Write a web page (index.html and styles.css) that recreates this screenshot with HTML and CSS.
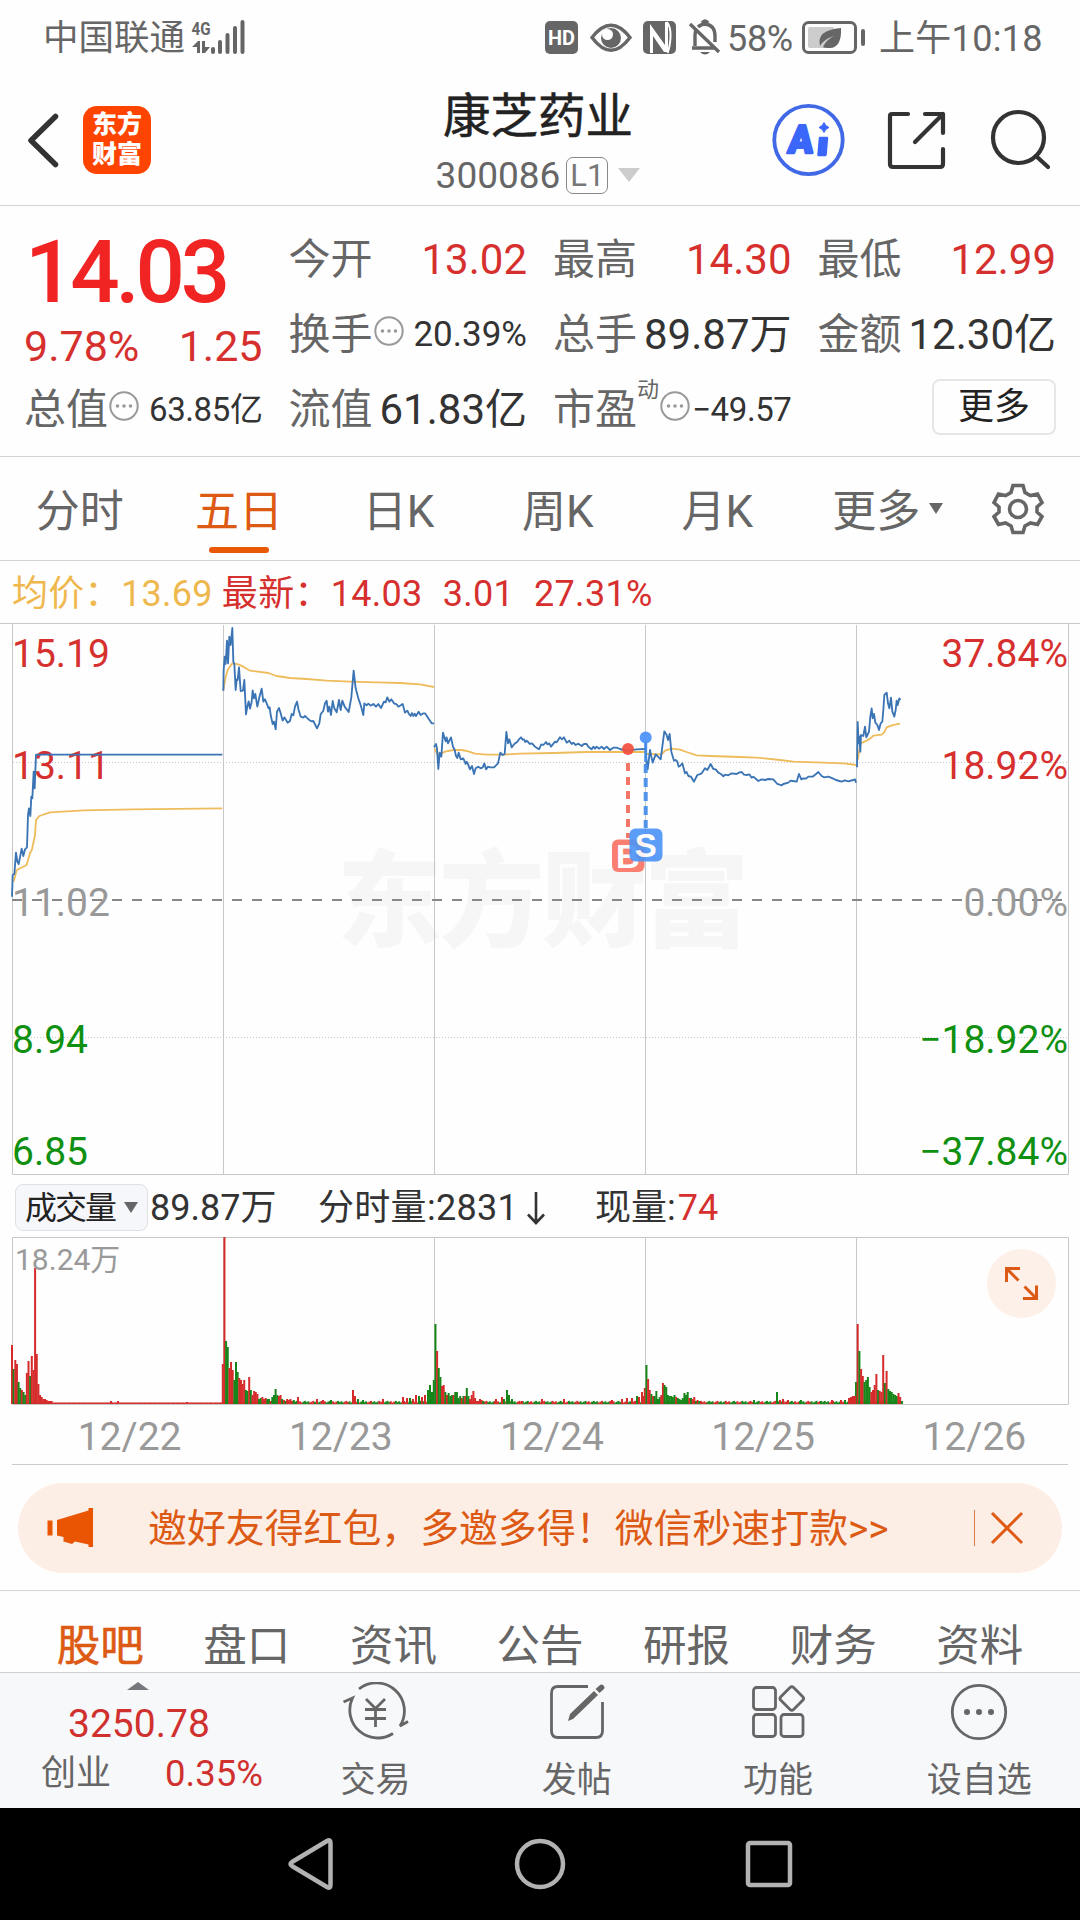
FILE: index.html
```html
<!DOCTYPE html>
<html lang="zh-CN">

	<head>
		<meta charset="UTF-8">
		<title>康芝药业</title>
		<link rel="stylesheet" href="styles.css">
	</head>

	<body>
		<div class="status">
			<span class="carrier">中国联通</span>
			<svg class="signal" width="54" height="40" viewBox="191 14 54 40">
				<text x="191.500" y="34" font-size="19" font-weight="700" textLength="19" lengthAdjust="spacingAndGlyphs">4G</text>
				<path d="M192 46l6-6h2v12h-3v-6zM202 40h3v6h5l-5 6h-3z" />
				<rect x="211" y="46" width="4" height="7" rx="2" />
				<rect x="218" y="39" width="4" height="14" rx="2" />
				<rect x="225.500" y="32" width="4" height="21" rx="2" />
				<rect x="233" y="25" width="4" height="28" rx="2" />
				<rect x="240.500" y="19" width="4" height="34" rx="2" />
			</svg>
			<svg class="state" width="178" height="36" viewBox="544 18 178 36">
				<rect x="545" y="20" width="33" height="33" rx="5" />
				<text class="hd" x="548" y="44" font-size="20" font-weight="700" textLength="27" lengthAdjust="spacingAndGlyphs">HD</text>
				<path class="ln" d="M592 36.500Q611 12 630 36.500Q611 62 592 36.500z" />
				<circle cx="611" cy="37" r="10" />
				<circle cx="607.500" cy="33.500" r="5.500" fill="#fff" />
				<rect x="643" y="20" width="33" height="33" rx="5" />
				<path d="M650 52V23L665 44V21H668V51H664L653 35V52z" fill="#fff" />
				<path d="M667 21q4 5 3.500 15t-3 16" fill="none" stroke="#fff" stroke-width="2" />
				<path class="ln" d="M692 47h23M695 45V34q0-4 2-6M698 26q3-3 7-3q10 1 10 12v6M702 22q3-4 6 0M690 23l29 28" />
				<path d="M700 51h10q-5 5-10 0z" />
			</svg>
			<span class="percent">58%</span>
			<svg class="battery" width="64" height="36" viewBox="802 18 64 36">
				<rect x="803.500" y="21.500" width="52" height="30" rx="5" fill="none" stroke="#666" stroke-width="3" />
				<rect x="808" y="26" width="26" height="21" rx="2" fill="#ccc" />
				<path d="M841 27Q842 48 828 47Q824 47 823 46Q826 39 834 35Q824 38 820 45Q816 29 841 27z" />
				<rect x="861" y="28" width="4" height="17" rx="2" />
			</svg>
			<span class="time">上午10:18</span>
		</div>

		<div class="header">
			<svg class="back" width="34" height="58" viewBox="26 110 34 58">
				<path d="M55.500 115.500L31 139.500L55.500 163.500" fill="none" stroke="#333" stroke-width="5.500" stroke-linecap="round" stroke-linejoin="round" />
			</svg>
			<div class="logo">东方<br>财富</div>
			<div class="title">
				<h1>康芝药业</h1>
				<p>300086<i>L1</i><b class="tri"></b></p>
			</div>
			<svg class="tools" width="284" height="74" viewBox="771 102 284 74">
				<circle cx="808.500" cy="139" r="34.200" fill="none" stroke="#4169e6" stroke-width="3.800" />
				<g fill="#3a66fa" stroke="#3a66fa" stroke-linejoin="round" font-family="Roboto">
					<text x="787" y="152" font-size="39" font-weight="900" stroke-width="2.500" textLength="25" lengthAdjust="spacingAndGlyphs" transform="translate(13.500 0) skewX(-5)">A</text>
					<path d="M820 137h7l-1.500 17h-7z" stroke-width="2.500" />
					<path d="M824 121.500q1.500 4 5 5q-3.500 1-5 5q-1.500-4-5-5q3.500-1 5-5z" stroke-width="1" />
				</g>
				<g fill="none" stroke="#333" stroke-width="4.200" stroke-linecap="round" stroke-linejoin="round">
					<path d="M908 113H892q-2 0-2 2V163q0 3 3 3H940q3 0 3-3V148M925 113H943V132M943 113L915 141" />
					<circle cx="1018.500" cy="136.500" r="25.500" />
					<path d="M1036 155L1048 166" />
				</g>
			</svg>
		</div>

		<div class="quote">
			<div class="now">
				<strong>14.03</strong>
				<p class="red"><span>9.78%</span><span>1.25</span></p>
			</div>
			<dl><dt>今开</dt><dd class="red">13.02</dd></dl>
			<dl><dt>最高</dt><dd class="red">14.30</dd></dl>
			<dl><dt>最低</dt><dd class="red">12.99</dd></dl>
			<dl><dt>换手<svg class="tip" viewBox="0 0 30 30"><use href="#tip" /></svg></dt><dd class="sm">20.39%</dd></dl>
			<dl><dt>总手</dt><dd>89.87万</dd></dl>
			<dl><dt>金额</dt><dd>12.30亿</dd></dl>
			<dl><dt>总值<svg class="tip" viewBox="0 0 30 30"><use href="#tip" /></svg></dt><dd class="xs">63.85亿</dd></dl>
			<dl><dt>流值</dt><dd>61.83亿</dd></dl>
			<dl><dt>市盈<sup>动</sup><svg class="tip" viewBox="0 0 30 30"><use href="#tip" /></svg></dt><dd class="xs">−49.57</dd></dl>
			<a class="more">更多</a>
		</div>

		<ul class="tabs">
			<li>分时</li>
			<li class="ac">五日</li>
			<li>日K</li>
			<li>周K</li>
			<li>月K</li>
			<li class="drop">更多<b class="tri"></b></li>
			<li class="set">
				<svg width="54" height="54" viewBox="0 0 54 54" fill="none" stroke="#666" stroke-width="3.600">
					<path d="M22 3.500H32L34 10.500L39.500 13.500L46.500 12L51 20.500L46 25V30L51 34.500L46.500 42.500L39.500 41L34 44L32 50.500H22L20 44L14.500 41L7.500 42.500L3 34.500L8 30V25L3 20.500L7.500 12L14.500 13.500L20 10.500z" />
					<circle cx="27" cy="27" r="8.500" />
				</svg>
			</li>
		</ul>

		<div class="info">
			<span class="avg">均价：13.69</span>
			<span>最新：14.03</span>
			<span>3.01</span>
			<span>27.31%</span>
		</div>

		<svg class="chart" width="1080" height="552" viewBox="0 623 1080 552">
			<text class="mark" x="337" y="938" textLength="412">东方财富</text>
			<g class="grid">
				<path d="M0 623.500H1080M12.500 623V1174.500H1068.500V623M223.500 625V1174M434.500 625V1174M645.500 625V1174M856.500 625V1174" />
				<path d="M13 762.500H1068M13 1037.500H1068" stroke-dasharray="1 2" />
			</g>
			<path d="M12 900H1068" stroke="#888" stroke-width="2" stroke-dasharray="10 10" />
			<g class="labels">
				<text x="12" y="667" fill="#d6302e">15.19</text>
				<text x="12" y="779" fill="#d6302e">13.11</text>
				<text x="12" y="916" fill="#999">11.02</text>
				<text x="12" y="1053" fill="#109010">8.94</text>
				<text x="12" y="1165" fill="#109010">6.85</text>
			</g>
			<g class="labels" text-anchor="end">
				<text x="1068" y="667" fill="#d6302e">37.84%</text>
				<text x="1068" y="779" fill="#d6302e">18.92%</text>
				<text x="1068" y="916" fill="#999">0.00%</text>
				<text x="1068" y="1053" fill="#109010">−18.92%</text>
				<text x="1068" y="1165" fill="#109010">−37.84%</text>
			</g>
			<!-- 12/22 - 12/23 -->
			<g class="line" transform="translate(0 560) scale(.33333)">
				<polyline class="y" points="41,965 50,930 80,915 90,880 96,868 105,825 108,780 118,768 150,757 250,751 400,748 667,745" />
				<polyline points="36,1010 38,945 43,942 48,878 52,905 56,912 65,866 70,888 75,868 81,862 84,765 87,745 91,768 94,710 97,715 101,635 104,685 108,584 667,584" />
				<polyline class="y" points="670,392 676,355 683,330 697,310 715,313 730,320 750,332 805,339 830,348 870,354 920,357 980,362 1050,365 1130,367 1200,369 1260,373 1302,381" />
				<polyline points="670,392 671,330 674,290 677,312 681,242 684,310 688,230 692,255 697,204 700,305 703,312 707,390 710,358 713,360 717,322 722,393 729,392 733,360 738,463 742,440 746,424 750,446 755,425 758,391 762,415 766,402 772,440 778,412 785,386 790,425 795,418 800,430 806,445 809,442 812,465 818,492 822,485 827,508 831,455 837,444 842,460 848,482 853,472 858,480 863,488 870,483 875,462 880,466 885,440 891,425 896,450 902,470 910,473 915,468 920,473 928,480 934,484 940,483 951,505 958,490 962,463 970,452 975,430 980,422 984,455 988,440 993,465 998,423 1003,445 1010,457 1017,420 1022,450 1027,422 1034,440 1046,456 1054,412 1061,332 1067,385 1075,415 1082,435 1090,465 1093,430 1100,436 1105,431 1112,437 1120,432 1128,440 1135,432 1143,444 1152,425 1157,427 1162,412 1168,425 1174,418 1182,430 1190,433 1195,440 1200,437 1208,432 1215,458 1222,452 1227,462 1232,468 1236,459 1240,468 1244,461 1248,468 1256,455 1262,465 1270,460 1275,460 1285,475 1295,490 1302,490" />
			</g>
			<!-- 12/24 - 12/25 -->
			<g class="line" transform="translate(420 600) scale(.33333)">
				<polyline class="y" points="44,445 52,463 62,462 75,455 100,450 125,450 145,454 165,461 200,464 250,464 300,461 400,459 500,456 677,456" />
				<polyline points="42,442 48,432 51,445 55,507 59,458 64,470 69,398 74,415 77,424 80,412 84,430 93,412 99,440 104,450 108,468 112,474 116,458 122,478 130,475 137,492 140,485 143,490 150,508 156,498 162,522 167,505 175,500 182,505 188,502 193,490 198,508 204,500 210,502 222,502 234,490 241,458 248,465 254,462 259,396 264,430 268,418 275,442 283,432 292,425 297,418 303,412 308,419 312,418 316,426 320,422 330,432 336,430 345,440 357,448 364,433 370,435 378,426 382,433 388,430 393,440 405,425 410,427 420,412 426,418 432,412 440,428 448,422 455,432 460,428 467,435 475,431 485,438 492,432 500,432 505,440 515,448 520,440 525,446 530,440 538,446 545,440 552,447 560,440 570,450 580,443 590,443 600,447 610,450 625,452 650,448 677,447" />
				<polyline class="y" points="679,462 725,463 735,452 755,446 780,449 800,456 830,466 870,468 960,471 1010,473 1080,480 1120,485 1210,488 1270,490 1310,495" />
				<polyline points="677,425 678,470 683,508 690,450 694,470 698,488 707,463 714,470 722,478 727,440 733,394 740,405 744,420 749,402 754,455 762,482 767,480 772,485 776,500 780,498 787,490 795,520 800,516 805,528 813,530 822,545 832,525 838,523 845,520 855,505 862,510 872,492 880,507 887,508 895,518 903,522 910,529 915,524 925,526 935,520 950,522 957,518 965,516 972,524 980,525 988,523 995,533 1000,530 1015,543 1025,538 1035,540 1045,537 1060,538 1072,552 1085,556 1090,552 1105,548 1112,542 1118,543 1130,545 1137,522 1144,538 1150,535 1158,536 1165,530 1178,530 1188,522 1195,516 1205,528 1213,532 1225,530 1238,535 1248,540 1265,545 1275,541 1285,544 1300,540 1305,538 1308,548" />
			</g>
			<!-- 12/26 -->
			<g class="line" transform="translate(740 600) scale(.33333)">
				<polyline class="y" points="353,480 362,430 380,422 392,415 400,407 425,404 432,398 440,382 455,376 480,371" />
				<polyline points="351,502 353,366 356,430 358,410 361,455 363,405 370,408 375,380 379,412 387,395 391,350 395,325 398,355 402,342 406,368 412,375 417,390 422,370 427,365 430,330 433,285 440,278 444,310 448,325 453,293 457,335 463,350 467,330 470,302 473,315 478,295 481,300" />
			</g>
			<g opacity=".92">
				<path d="M628 763V838" stroke="#f26b5e" stroke-width="4" stroke-dasharray="8 6" />
				<circle cx="628" cy="749" r="6" fill="#f4503f" />
				<rect x="612" y="839.500" width="32.500" height="32.500" rx="6" fill="#fa7565" />
				<text class="bs" x="628" y="868">B</text>
			</g>
			<g opacity=".9">
				<path d="M645.700 764V828" stroke="#418be8" stroke-width="4" stroke-dasharray="9 5" />
				<path d="M645.700 738V762" stroke="#418be8" stroke-width="3" />
				<circle cx="645.700" cy="737.500" r="6" fill="#4690fa" />
				<rect x="629.500" y="828.500" width="33" height="33" rx="6" fill="#4b93f7" />
				<text class="bs" x="645.800" y="857">S</text>
			</g>
		</svg>

		<div class="volbar">
			<span class="select">成交量<b class="tri"></b></span>
			<span class="total">89.87万</span>
			<span class="min">分时量:2831</span>
			<svg width="20" height="36" viewBox="0 0 20 36"><path d="M10 2V33M2 24.500L10 33L18 24.500" fill="none" stroke="#333" stroke-width="2.600" /></svg>
			<span class="cur">现量:<em>74</em></span>
		</div>

		<svg class="volume" width="1080" height="169" viewBox="0 1237 1080 169">
			<path class="frame" d="M12.500 1404.500V1237.500H1068.500V1404.500zM223.500 1238V1404M434.500 1238V1404M645.500 1238V1404M856.500 1238V1404" />
			<g id="bars"></g>
			<text x="15" y="1270" font-size="30" fill="#999">18.24万</text>
			<circle cx="1021.500" cy="1283.500" r="34.500" fill="#fdf0e8" />
			<path d="M1006.500 1282V1268.500H1020M1007 1269L1018.500 1280.500M1023 1298.500H1036.500V1285.500M1036 1298L1024.500 1286.500" fill="none" stroke="#dc5a16" stroke-width="3" />
		</svg>

		<ul class="dates">
			<li>12/22</li>
			<li>12/23</li>
			<li>12/24</li>
			<li>12/25</li>
			<li>12/26</li>
		</ul>

		<div class="banner">
			<svg width="46" height="40" viewBox="47 1508 46 40" fill="#ea5504">
				<path d="M47.500 1520.500h5v15h-5zM57 1520L88.500 1510.500V1508H93V1547H88.500V1544.500L75 1541.500L72 1544L63.500 1541.500V1537L57 1535.500z" />
			</svg>
			<span>邀好友得红包，多邀多得！微信秒速打款&gt;&gt;</span>
			<i></i>
			<svg width="34" height="34" viewBox="0 0 34 34"><path d="M2 2L32 32M32 2L2 32" stroke="#df5a14" stroke-width="3" /></svg>
		</div>

		<ul class="nav">
			<li class="ac">股吧</li>
			<li>盘口</li>
			<li>资讯</li>
			<li>公告</li>
			<li>研报</li>
			<li>财务</li>
			<li>资料</li>
		</ul>

		<div class="foot">
			<div class="index">
				<b class="tri"></b>
				<strong>3250.78</strong>
				<p>创业<em>0.35%</em></p>
			</div>
			<a>
				<svg width="68" height="60" viewBox="342 1682 68 60">
					<path d="M359 1689A28 28 0 0 1 400 1726L408 1721.500M343.500 1702L352.500 1698A28 28 0 0 0 393 1733.500" />
					<path d="M366 1699L375.500 1708.500L385 1699M365 1709.500H386M365 1718.500H386M375.500 1708.500V1727" />
				</svg>
				交易
			</a>
			<a>
				<svg width="68" height="60" viewBox="543 1682 68 60">
					<path d="M588 1686.500H558q-6.500 0-6.500 6.500V1731q0 6.500 6.500 6.500H596q6.500 0 6.500-6.500V1702" />
					<path d="M568 1721l2-7L594 1691l4 4L573 1719zM595.500 1689l4-3.500q2-2 4 0t0 4L599.500 1693z" fill="#666" stroke="none" />
				</svg>
				发帖
			</a>
			<a>
				<svg width="68" height="60" viewBox="744 1682 68 60">
					<rect x="753.500" y="1687.500" width="22" height="22" rx="3" />
					<rect x="753.500" y="1714.500" width="22" height="22" rx="3" />
					<rect x="781" y="1714.500" width="22" height="22" rx="3" />
					<rect x="782.800" y="1689.500" width="18" height="18" rx="2.500" transform="rotate(45 791.800 1698.500)" />
				</svg>
				功能
			</a>
			<a>
				<svg width="68" height="60" viewBox="945 1682 68 60">
					<circle cx="979" cy="1712" r="26.700" />
					<path d="M967 1712h.01M979 1712h.01M991 1712h.01" stroke-width="6" stroke-linecap="round" />
				</svg>
				设自选
			</a>
		</div>

		<div class="keys">
			<svg width="50" height="56" viewBox="0 0 50 56"><path d="M44.500 7V49q0 4-3.500 2L6 30q-3-2 0-4L41 5q3.500-2 3.500 2z" /></svg>
			<svg width="56" height="56" viewBox="0 0 56 56"><circle cx="28" cy="28" r="23" /></svg>
			<svg width="50" height="56" viewBox="0 0 50 56"><rect x="4" y="7" width="42" height="42" rx="2" /></svg>
		</div>

		<svg class="defs">
			<g id="tip">
				<circle cx="15" cy="15" r="13.700" fill="none" stroke="#999" stroke-width="2" />
				<path d="M8.500 15h.01M15 15h.01M21.500 15h.01" stroke="#999" stroke-width="3.600" stroke-linecap="round" />
			</g>
		</svg>
		<script src="script.js"></script>
	</body>

</html>
```

FILE: styles.css
```css
* {
	margin: 0;
	padding: 0;
	box-sizing: border-box;
}

body {
	width: 1080px;
	height: 1920px;
	overflow: hidden;
	background: #fefefe;
	color: #333;
	font-family: Roboto, "Noto Sans CJK SC", sans-serif;
	line-height: 1;
}

li {
	list-style: none;
}

i, em {
	font-style: normal;
}

svg {
	display: block;
	flex: none;
}

.defs {
	width: 0;
	height: 0;
}

.red {
	color: #d6302e;
}

.tri {
	width: 0;
	height: 0;
	border: 7px solid transparent;
	border-top: 11px solid #666;
	border-bottom: 0;
}

/* status bar */
.status {
	height: 74px;
	padding: 0 37px 0 43px;
	display: flex;
	align-items: center;
	color: #666;
	fill: #666;
	font-size: 36px;
	white-space: nowrap;
}

.status span {
	padding-top: 3px;
}

.signal {
	margin-top: -4px;
}

.carrier {
	width: 148px;
	font-size: 35.5px;
}

.state {
	margin-left: 299px;
}

.status .ln {
	fill: none;
	stroke: #666;
	stroke-width: 3.4;
}

.status .hd {
	fill: #fff;
}

.status .percent {
	width: 80px;
	padding-left: 5px;
	letter-spacing: -.3px;
}

.battery {
	margin-right: 13px;
}

.time {
	letter-spacing: .3px;
}

/* header */
.header {
	height: 132px;
	padding: 0 25px 0 26px;
	display: flex;
	align-items: center;
	border-bottom: 1px solid #d4d4d6;
}

.logo {
	width: 68px;
	height: 68px;
	margin-left: 23px;
	padding-top: 4px;
	border-radius: 14px;
	background: #ff4400;
	color: #fff;
	font-size: 25px;
	font-weight: 900;
	line-height: 30px;
	text-align: center;
}

.title {
	width: 240px;
	margin: 0 auto 0 267px;
	padding-top: 9px;
	text-align: center;
}

.title h1 {
	color: #222;
	font-size: 47.5px;
	font-weight: 400;
	line-height: 62px;
	-webkit-text-stroke: .5px #222;
}

.title p {
	height: 54px;
	display: flex;
	align-items: center;
	justify-content: center;
	color: #666;
	font-size: 37px;
}

.title i {
	width: 42px;
	height: 37px;
	margin-left: 6px;
	border: 1.5px solid #888;
	border-radius: 7px;
	color: #777;
	font-size: 31px;
	line-height: 35px;
}

.title .tri {
	margin-left: 10px;
	border-width: 14px 11px 0;
	border-top-color: #ccc;
}

/* quote */
.quote {
	height: 251px;
	padding: 16px 24px 0;
	display: grid;
	grid-template-columns: repeat(4, minmax(0, 1fr));
	grid-auto-rows: 75px;
	column-gap: 26px;
	border-bottom: 1px solid #d4d4d6;
}

.now {
	grid-row: span 2;
}

.now strong {
	display: block;
	height: 99px;
	padding-left: 1px;
	color: #f12424;
	font-size: 87px;
	font-weight: 500;
	letter-spacing: -4.2px;
	line-height: 101px;
}

.now p {
	display: flex;
	justify-content: space-between;
	font-size: 43px;
	line-height: 50px;
}

.quote dl {
	display: flex;
	justify-content: space-between;
	align-items: center;
	font-size: 42px;
	white-space: nowrap;
}

.quote dt {
	display: flex;
	align-items: center;
	color: #666;
}

.quote dd.sm {
	font-size: 35px;
}

.quote dd.xs {
	font-size: 33px;
	letter-spacing: -.4px;
}

.quote sup {
	margin-top: -39px;
	font-size: 22px;
}

.tip {
	width: 30px;
	height: 30px;
	margin: -8px 0 0 1px;
}

.more {
	width: 124px;
	height: 56px;
	margin-top: 7px;
	justify-self: end;
	border: 2px solid #e6e6e9;
	border-radius: 8px;
	color: #222;
	font-size: 36px;
	line-height: 53px;
	text-align: center;
}

/* period tabs */
.tabs {
	height: 104px;
	display: flex;
	border-bottom: 1px solid #d4d4d6;
	color: #666;
	font-size: 44px;
	line-height: 110px;
}

.tabs li {
	width: 159.4px;
	position: relative;
	text-align: center;
}

.tabs .ac {
	color: #dd5a14;
}

.tabs .ac::after {
	content: "";
	position: absolute;
	left: 50%;
	bottom: 7px;
	width: 60px;
	height: 6px;
	margin-left: -30px;
	border-radius: 3px;
	background: #e85805;
}

.tabs .drop {
	padding-left: 22px;
	display: flex;
	justify-content: center;
}

.tabs .drop .tri {
	margin: 46px 0 0 9px;
}

.tabs .set {
	flex: 1;
	padding: 25px 0 0 35px;
}

/* price chart */
.info {
	height: 62px;
	padding: 0 12px;
	display: flex;
	gap: 20px;
	color: #d6302e;
	font-size: 36px;
	letter-spacing: .3px;
	line-height: 66px;
}

.info .avg {
	margin-right: -11px;
	color: #efb84f;
}

.grid, .frame {
	fill: none;
	stroke: #c8c8c8;
	stroke-width: 1;
}

.mark {
	fill: #f6f6f6;
	font-size: 105px;
	font-weight: 900;
}

.labels {
	font-size: 39px;
}

.line polyline {
	fill: none;
	stroke: #3a74b4;
	stroke-width: 5.5;
	stroke-linejoin: round;
}

.line .y {
	stroke: #efbc5c;
}

.bs {
	fill: #fff;
	font-family: "Liberation Sans", sans-serif;
	font-size: 33px;
	font-weight: 700;
	text-anchor: middle;
}

/* volume */
.volbar {
	height: 62px;
	padding: 3px 0 0 15px;
	display: flex;
	align-items: center;
	font-size: 36px;
	white-space: nowrap;
}

.select {
	width: 133px;
	height: 47px;
	padding-left: 9px;
	display: flex;
	align-items: center;
	border: 1px solid #e0e1e5;
	border-radius: 8px;
	background: #f6f7fa;
	color: #222;
	font-size: 32px;
	letter-spacing: -2px;
}

.select .tri {
	margin-left: 9px;
}

.total {
	width: 170px;
	padding-left: 2px;
}

.min {
	width: 208px;
	letter-spacing: .3px;
}

.cur {
	margin-left: 49px;
}

.cur em {
	margin-left: 2px;
	color: #d6302e;
}

.dates {
	height: 59px;
	margin: 0 12px;
	padding-left: 12px;
	display: flex;
	border-bottom: 1px solid #ccc;
	color: #999;
	font-size: 39px;
	line-height: 63px;
}

.dates li {
	flex: none;
	width: 211.2px;
	text-align: center;
}

/* banner */
.banner {
	width: 1044px;
	height: 90px;
	margin: 18px 18px 17px;
	padding: 0 38px 0 29px;
	display: flex;
	align-items: center;
	border-radius: 45px;
	background: #fceee5;
	color: #dc5a14;
	font-size: 38.9px;
	white-space: nowrap;
}

.banner span {
	width: 881px;
	padding: 2px 0 0 55px;
}

.banner i {
	width: 1.5px;
	height: 36px;
	margin-right: 15px;
	background: #dc7a48;
}

.nav {
	height: 82px;
	padding: 0 27px;
	display: flex;
	border-top: 1px solid #d4d4d6;
	color: #666;
	font-size: 43.5px;
	line-height: 112px;
}

.nav li {
	flex: 1;
	text-align: center;
}

.nav .ac {
	color: #dc5a14;
	-webkit-text-stroke: .6px #dc5a14;
}

.foot {
	height: 136px;
	display: flex;
	border-top: 1px solid #cfcfd2;
	background: #f7f8fa;
	color: #666;
	font-size: 35px;
}

.index {
	width: 275px;
	padding-top: 9px;
}

.index .tri {
	display: block;
	margin-left: 127px;
	border-width: 0 11px 8px;
	border-bottom: 8px solid #77777e;
}

.index strong {
	display: block;
	margin-left: 68px;
	color: #d0302e;
	font-size: 39px;
	font-weight: 400;
	line-height: 69px;
}

.index p {
	padding: 0 12px 0 41px;
	display: flex;
	justify-content: space-between;
	line-height: 30px;
}

.index em {
	color: #d0302e;
	font-size: 36.5px;
}

.foot a {
	flex: 1;
	padding-top: 9px;
	text-align: center;
	line-height: 78px;
}

.foot svg {
	margin: 0 auto;
	fill: none;
	stroke: #666;
	stroke-width: 2.8;
}

.keys {
	height: 112px;
	display: flex;
	align-items: center;
	justify-content: center;
	gap: 176px;
	background: #000;
	fill: none;
	stroke: #b2b2b2;
	stroke-width: 4.5;
}
```

FILE: script.js
```javascript
var bars = document.querySelector("#bars");
var base = 1404;
// height + colour, one bar each 1.65px from the start of the day
var days = [
	[11, "59r 35g 44r 40r 22g 16g 14r 12g 9g 31r 43r 28g 48r 34r 136r 50r 20r 9r 7r 5r 5r 4r 3r 3r 3r"],
	[221.8, "40r 167r 63g 57g 36r 42r 34r 24g 42g 32g 26r 24r 20r 24r 14g 13g 27r 14g 9r 13r 12r 10r 5g 6g 7r 5r 6r 5g 5g 3r 7g 9g 15g 9g 8r 9r 5g 4r 3g 5r 4r 5r 3r 4g"],
	[432.8, "24g 80g 53r 36g 27g 18r 19r 12g 9r 11g 8g 9g 9r 12g 12g 6g 8g 6r 8g 8r 16g 8g 5r 9r 13r 6r 3r 3r 5r 4r 3g"],
	[643.8, "16r 39g 25r 14r 10g 8r 8g 13g 5g 7g 9r 21r 19g 17g 9g 8g 8g 7g 9g 7r 6g 5g 4g 6g 11g 9g 12g 6r 6g 5r 7r 3g 4r 3g 3r"],
	[855, "22g 80r 53g 35r 28r 22g 24g 27g 17g 12r 14r 19r 30r 14g 13r 12r 49r 21g 33r 15g 13g 12g 10g 9g 8g 11r 7r 3g"]
];
var spikes = "110 3r,117 3r,186 2r,297 7r,316 5r,322 4r,330 4g,352 14r,354 8r,357 5g,362 4g,382 5r,402 7r,406 6r,409 6g,412 5r,415 9r,418 8g,421 7r,424 9r,427 14g,429 19g,431 12g," +
	"495 5r,501 7r,503 5g,506 14g,508 9g,511 5g,521 3r,541 5r,563 5r,611 4r,621 5r,626 6r,631 6r,636 8g,638 7r,641 12r,642 8r," +
	"753 4g,776 12g,779 4r,782 5r,787 4r,800 4g,820 3g,831 4r,840 4r,844 4g,848 6r,850 7r,852 8r,854 8r";

function addBar(x, h, color){
	var rect = document.createElementNS("http://www.w3.org/2000/svg", "rect");
	rect.setAttribute("x", x);
	rect.setAttribute("y", base - h);
	rect.setAttribute("width", 2);
	rect.setAttribute("height", h);
	rect.setAttribute("fill", color === "r" ? "#d62b2b" : "#17861a");
	bars.appendChild(rect);
}

for(var x = 12, i = 0; x < 900; x += 1.65, i++){
	var flat = x < 222;
	addBar(x, flat ? 1.5 : 1.5 + (i * 7 % 5) * .4, flat || i * 13 % 7 < 3 ? "r" : "g");
}
days.forEach(function(day){
	var step = day[0] === 855 ? 1.7 : 1.65;
	day[1].split(" ").forEach(function(bar, i){
		addBar(day[0] + i * step, parseInt(bar), bar.slice(-1));
	});
});
spikes.split(",").forEach(function(spike){
	var s = spike.split(" ");
	addBar(+s[0], parseInt(s[1]), s[1].slice(-1));
});
```
